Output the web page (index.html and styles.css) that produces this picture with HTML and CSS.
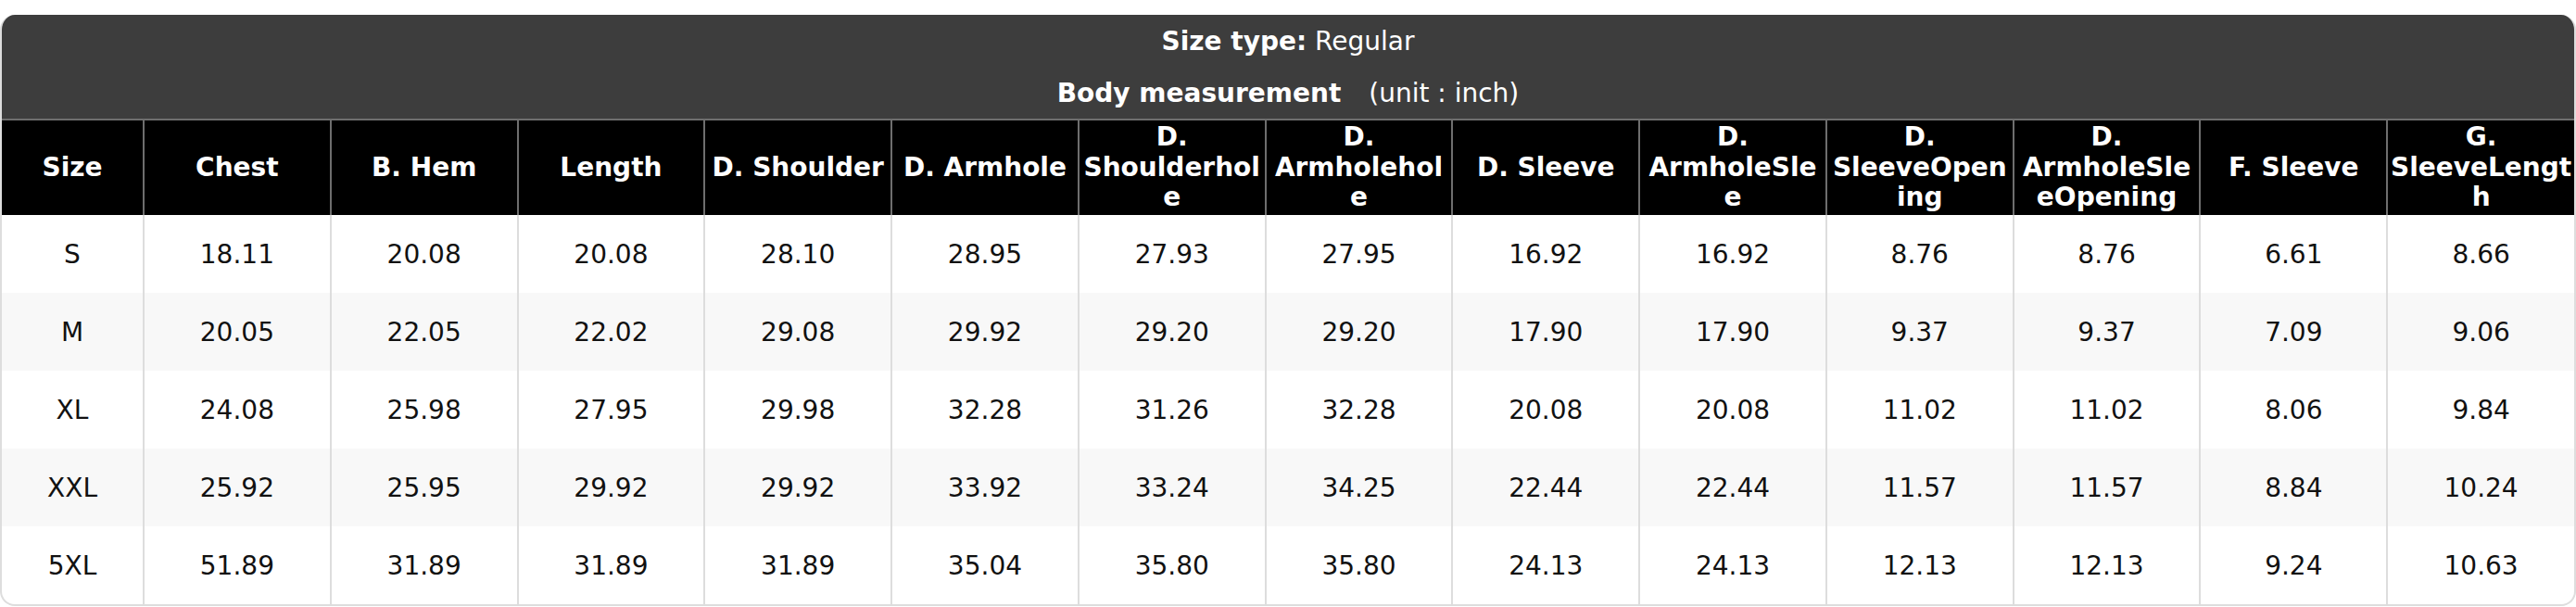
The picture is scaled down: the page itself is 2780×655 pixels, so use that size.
FILE: index.html
```html
<!DOCTYPE html>
<html lang="en">
<head>
<meta charset="utf-8">
<title>Size chart</title>
<link rel="stylesheet" href="styles.css">
</head>
<body>
<div class="chart">
  <div class="caption"><strong>Size type:</strong> Regular</div>
  <div class="caption"><strong class="gap">Body measurement</strong>(unit : inch)</div>
  <table class="size-table">
    <colgroup>
      <col class="col-size">
      <col span="13">
    </colgroup>
    <thead>
      <tr>
        <th>Size</th><th>Chest</th><th>B. Hem</th><th>Length</th><th>D. Shoulder</th><th>D. Armhole</th><th>D. Shoulderhole</th><th>D. Armholehole</th><th>D. Sleeve</th><th>D. ArmholeSlee</th><th>D. SleeveOpening</th><th>D. ArmholeSleeOpening</th><th>F. Sleeve</th><th>G. SleeveLength</th>
      </tr>
    </thead>
    <tbody>
      <tr><td>S</td><td>18.11</td><td>20.08</td><td>20.08</td><td>28.10</td><td>28.95</td><td>27.93</td><td>27.95</td><td>16.92</td><td>16.92</td><td>8.76</td><td>8.76</td><td>6.61</td><td>8.66</td></tr>
      <tr><td>M</td><td>20.05</td><td>22.05</td><td>22.02</td><td>29.08</td><td>29.92</td><td>29.20</td><td>29.20</td><td>17.90</td><td>17.90</td><td>9.37</td><td>9.37</td><td>7.09</td><td>9.06</td></tr>
      <tr><td>XL</td><td>24.08</td><td>25.98</td><td>27.95</td><td>29.98</td><td>32.28</td><td>31.26</td><td>32.28</td><td>20.08</td><td>20.08</td><td>11.02</td><td>11.02</td><td>8.06</td><td>9.84</td></tr>
      <tr><td>XXL</td><td>25.92</td><td>25.95</td><td>29.92</td><td>29.92</td><td>33.92</td><td>33.24</td><td>34.25</td><td>22.44</td><td>22.44</td><td>11.57</td><td>11.57</td><td>8.84</td><td>10.24</td></tr>
      <tr><td>5XL</td><td>51.89</td><td>31.89</td><td>31.89</td><td>31.89</td><td>35.04</td><td>35.80</td><td>35.80</td><td>24.13</td><td>24.13</td><td>12.13</td><td>12.13</td><td>9.24</td><td>10.63</td></tr>
    </tbody>
  </table>
</div>
</body>
</html>
```
FILE: styles.css
```css
html, body {
  margin: 0;
  padding: 0;
  background: #ffffff;
}

body {
  padding-top: 16px;
  font-family: "DejaVu Sans", sans-serif;
  font-size: 28px;
  color: #111111;
}

.chart {
  width: 2780px;
  box-sizing: border-box;
  border: 2px solid #dddddd;
  border-top: none;
  border-radius: 16px;
  overflow: hidden;
  background: #ffffff;
}

.caption {
  height: 56px;
  display: flex;
  align-items: center;
  justify-content: center;
  background: #3d3d3d;
  color: #ffffff;
  white-space: pre;
}

.caption strong {
  font-weight: bold;
}

.caption .gap {
  margin-right: 30px;
}

.size-table {
  width: 100%;
  border-collapse: collapse;
  table-layout: fixed;
}

.col-size {
  width: 153px;
}

.size-table th {
  background: #000000;
  color: #ffffff;
  font-weight: bold;
  height: 102px;
  padding: 0 2px;
  border: 2px solid #6e6e6e;
  border-bottom: none;
  text-align: center;
  vertical-align: middle;
  overflow-wrap: anywhere;
  line-height: 1.16;
}

.size-table th:first-child {
  border-left: none;
}

.size-table th:last-child {
  border-right: none;
}

.size-table td {
  height: 84px;
  padding: 0;
  border-left: 2px solid #dddddd;
  border-right: 2px solid #dddddd;
  text-align: center;
  vertical-align: middle;
}

.size-table td:first-child {
  border-left: none;
}

.size-table td:last-child {
  border-right: none;
}

.size-table tbody tr:nth-child(even) td {
  background: #f8f8f8;
}
```
